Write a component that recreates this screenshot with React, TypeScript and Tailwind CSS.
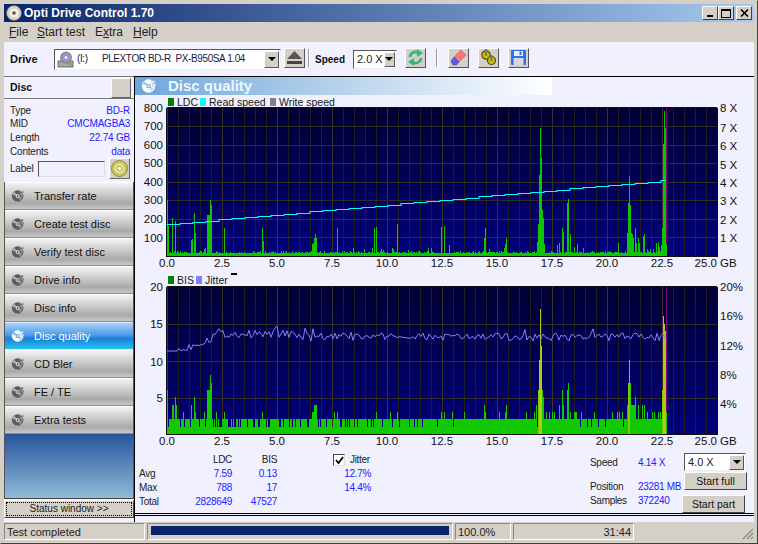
import React from "react";

// seeded noise, so the charts are the same on every load
function noise(seed: number) {
  const v = Math.sin(seed * 12.9898) * 43758.5453;
  return v - Math.floor(v);
}

const PLOT_LEFT = 167;
const END = 499;

// x offset -> bar height in px
const ldcSpikes: Record<number, number> = {
  0: 56, 1: 30, 5: 38, 8: 35, 24: 16, 25: 17, 27: 43, 28: 23, 37: 7, 38: 8, 40: 41, 41: 41, 42: 41, 43: 56, 44: 51,
  49: 5, 57: 28, 95: 28, 96: 15, 145: 12, 146: 13, 147: 18, 148: 22, 149: 18, 170: 28, 186: 8, 197: 7, 205: 8,
  207: 28, 209: 29, 214: 7, 216: 6, 225: 8, 226: 7, 230: 32, 241: 6, 261: 8, 264: 8, 274: 29, 277: 30, 282: 11,
  317: 18, 318: 28, 322: 7, 337: 8, 338: 12, 339: 18, 360: 5, 370: 14, 371: 32, 372: 81, 373: 128, 374: 98, 375: 46,
  376: 38, 377: 12, 390: 11, 392: 13, 395: 28, 396: 24, 400: 53, 401: 57, 403: 22, 407: 9, 410: 12, 416: 8, 451: 13,
  460: 23, 461: 53, 462: 80, 463: 51, 464: 23, 465: 22, 466: 18, 468: 28, 469: 13, 471: 18, 472: 13, 476: 20, 477: 22,
  480: 7, 483: 7, 486: 7, 489: 13, 491: 14, 492: 9, 494: 11, 495: 28, 496: 112, 497: 145, 498: 128, 499: 12,
};

// x offset -> bar height in BIS units
const bisSpikes: Record<number, number> = {
  0: 6, 5: 4, 6: 4, 8: 5, 9: 4, 16: 3, 24: 4, 27: 5, 28: 3, 37: 3, 40: 6, 41: 6, 42: 6, 43: 8, 44: 7, 49: 3, 57: 3,
  95: 3, 145: 3, 146: 3, 147: 4, 148: 4, 149: 4, 167: 3, 170: 3, 209: 3, 223: 3, 230: 3, 274: 3, 277: 3, 285: 3,
  297: 3, 317: 4, 318: 3, 332: 3, 338: 3, 339: 4, 359: 3, 367: 3, 369: 4, 371: 6, 372: 10, 373: 17, 374: 12, 375: 6,
  376: 5, 379: 3, 382: 3, 385: 3, 387: 3, 392: 4, 395: 6, 396: 4, 400: 6, 401: 7, 403: 3, 407: 3, 408: 3, 409: 3,
  414: 3, 427: 3, 445: 3, 450: 3, 452: 3, 455: 3, 460: 4, 461: 7, 462: 10, 463: 7, 464: 4, 465: 4, 466: 4, 467: 4,
  468: 5, 471: 4, 475: 4, 477: 4, 480: 3, 485: 3, 487: 3, 491: 3, 493: 3, 495: 6, 496: 16, 497: 15, 498: 14, 499: 3,
};

function ldcBars() {
  let d = "";
  for (let x = 0; x <= END; x++) {
    const n = noise(x + 3);
    const h = ldcSpikes[x] ?? (n > 0.9 ? 5 : n > 0.55 ? 4 : 3);
    d += `M${PLOT_LEFT + x + 0.5} 256V${256 - h}`;
  }
  return d;
}

function bisBars(match: (x: number) => boolean) {
  let d = "";
  for (let x = 0; x <= END; x++) {
    if (!match(x)) continue;
    const gapChance = x > 280 && x < 372 ? 0.06 : x > 372 ? 0.1 : 0.24;
    const units = bisSpikes[x] ?? (noise(x + 11) < gapChance ? 1 : 2);
    d += `M${PLOT_LEFT + x + 0.5} 434V${434 - Math.round(units * 7.35)}`;
  }
  return d;
}

function jitterLine() {
  let d = "";
  for (let x = 0; x <= END; x += 2) {
    let base = 100;
    if (x < 12) base = 83;
    else if (x < 45) base = 83 + ((x - 12) / 33) * 13;
    else if (x > 130) base = 97;
    const wobble = x < 12 ? 0 : (noise(x + 40) - 0.5) * 8;
    const peak = noise(x + 70) > 0.95 ? 5 : 0;
    d += `${x === 0 ? "M" : "L"}${PLOT_LEFT + x} ${(434 - base - wobble - peak).toFixed(1)}`;
  }
  return d;
}

function speedLine() {
  let d = `M${PLOT_LEFT} 224`;
  for (let x = 0; x <= END; x += 13) {
    const y = Math.round(224 - (x / END) * 44) + 0.5;
    d += `V${y}H${Math.min(PLOT_LEFT + x + 13, PLOT_LEFT + END)}`;
  }
  return d;
}

function Grid({ top, bottom, rows }: { top: number; bottom: number; rows: number[] }) {
  const cols = Array.from({ length: 51 }, (_, i) => i);
  return (
    <g shapeRendering="crispEdges">
      <defs>
        <linearGradient id={`plot${top}`} x1="0" y1="0" x2="0" y2="1">
          <stop offset="0" stopColor="#000034" />
          <stop offset="1" stopColor="#00007c" />
        </linearGradient>
      </defs>
      <rect x={PLOT_LEFT} y={top} width={550} height={bottom - top} fill={`url(#plot${top})`} />
      {cols.map((i) => (
        <line
          key={i}
          x1={PLOT_LEFT + i * 11 + 0.5}
          x2={PLOT_LEFT + i * 11 + 0.5}
          y1={top}
          y2={bottom}
          stroke={i % 5 === 0 ? "#38342c" : "#201f20"}
        />
      ))}
      {rows.map((y) => (
        <line key={y} x1={PLOT_LEFT} x2={717} y1={y + 0.5} y2={y + 0.5} stroke="#302e24" />
      ))}
      <line x1={PLOT_LEFT} x2={717} y1={top - 0.5} y2={top - 0.5} stroke="#101010" />
      <line x1={PLOT_LEFT - 0.5} x2={PLOT_LEFT - 0.5} y1={top} y2={bottom + 1} stroke="#101010" />
      <line x1={717.5} x2={717.5} y1={top} y2={bottom + 1} stroke="#101010" />
      <line x1={PLOT_LEFT} x2={718} y1={bottom + 0.5} y2={bottom + 0.5} stroke="#101010" />
      <line x1={666.5} x2={666.5} y1={top} y2={bottom} stroke="#800080" />
    </g>
  );
}

const xTicks = ["0.0", "2.5", "5.0", "7.5", "10.0", "12.5", "15.0", "17.5", "20.0", "22.5"];

function XLabels({ y }: { y: number }) {
  return (
    <g>
      {xTicks.map((t, i) => (
        <text key={t} x={PLOT_LEFT + i * 55} y={y} textAnchor="middle">
          {t}
        </text>
      ))}
      <text x={717} y={y} textAnchor="end">25.0</text>
      <text x={720} y={y}>GB</text>
    </g>
  );
}

function Legend({ y, items }: { y: number; items: { sq: number; tx: number; color: string; label: string }[] }) {
  return (
    <g fontSize="10.5">
      {items.map((it) => (
        <g key={it.label}>
          <rect x={it.sq} y={y - 4} width={6} height={8} fill={it.color} shapeRendering="crispEdges" />
          <text x={it.tx} y={y + 4} fill="#1a1a1a">{it.label}</text>
        </g>
      ))}
    </g>
  );
}

function LdcChart() {
  const left = [["800", 112], ["700", 130], ["600", 149], ["500", 167], ["400", 186], ["300", 204], ["200", 223], ["100", 242]] as const;
  const right = [["8 X", 112], ["7 X", 132], ["6 X", 150], ["5 X", 169], ["4 X", 187], ["3 X", 205], ["2 X", 224], ["1 X", 242]] as const;
  return (
    <svg className="block h-[177px] w-[619px]" viewBox="135 95 619 177" fontFamily="'Liberation Sans', sans-serif" fontSize="11.5" fill="#111">
      <Legend
        y={102}
        items={[
          { sq: 168, tx: 177, color: "#008000", label: "LDC" },
          { sq: 200, tx: 209, color: "#00ffff", label: "Read speed" },
          { sq: 270, tx: 279, color: "#808080", label: "Write speed" },
        ]}
      />
      <Grid top={108} bottom={256} rows={[126, 145, 163, 182, 200, 219, 237]} />
      <path d={ldcBars()} stroke="#10c400" fill="none" shapeRendering="crispEdges" />
      <path d={speedLine()} stroke="#00ffff" strokeWidth="1.1" fill="none" />
      {left.map(([t, y]) => (
        <text key={t} x={163} y={y} textAnchor="end">{t}</text>
      ))}
      {right.map(([t, y]) => (
        <text key={t} x={720} y={y}>{t}</text>
      ))}
      <XLabels y={267} />
    </svg>
  );
}

function BisChart() {
  const left = [["20", 291], ["15", 328], ["10", 366], ["5", 402]] as const;
  const right = [["20%", 291], ["16%", 320], ["12%", 350], ["8%", 379], ["4%", 408]] as const;
  const hot = (x: number) => (x >= 372 && x <= 374) || (x >= 496 && x <= 498);
  const warm = (x: number) => x === 371 || x === 462 || x === 461 || x === 495;
  return (
    <svg className="block h-[177px] w-[619px]" viewBox="135 272 619 177" fontFamily="'Liberation Sans', sans-serif" fontSize="11.5" fill="#111">
      <rect x={231} y={273} width={6} height={2} fill="#000" shapeRendering="crispEdges" />
      <Legend
        y={280}
        items={[
          { sq: 168, tx: 177, color: "#008000", label: "BIS" },
          { sq: 196, tx: 205, color: "#8080ff", label: "Jitter" },
        ]}
      />
      <Grid top={287} bottom={434} rows={[324, 361, 398]} />
      <path d={bisBars((x) => !hot(x) && !warm(x))} stroke="#12c800" fill="none" shapeRendering="crispEdges" />
      <path d={bisBars(warm)} stroke="#80c800" fill="none" shapeRendering="crispEdges" />
      <path d={bisBars(hot)} stroke="#b4c810" fill="none" shapeRendering="crispEdges" />
      <path d={jitterLine()} stroke="#8080ff" fill="none" strokeWidth="1" />
      {left.map(([t, y]) => (
        <text key={t} x={163} y={y} textAnchor="end">{t}</text>
      ))}
      {right.map(([t, y]) => (
        <text key={t} x={720} y={y}>{t}</text>
      ))}
      <XLabels y={445} />
    </svg>
  );
}

function DiscIcon({ className = "", color = "#5c5c5c", hole = "#d8d8d8" }: { className?: string; color?: string; hole?: string }) {
  return (
    <svg className={className} viewBox="0 0 18 18">
      <circle cx="8.5" cy="9" r="7.5" fill={color} />
      <path d="M8.5 9 L4 3.6 A7 7 0 0 0 2 7 Z" fill={hole} opacity="0.75" />
      <path d="M8.5 9 L14.6 11 A7 7 0 0 1 11.5 15 Z" fill={hole} opacity="0.45" />
      <circle cx="8.5" cy="9" r="2.6" fill={hole} />
      <circle cx="8.5" cy="9" r="1.2" fill={color} />
      <path d="M12 3 h4 v2 h-2 v2 h3 v2 h-4 z" fill={color} stroke={hole} strokeWidth="0.6" />
    </svg>
  );
}

function SmallCombo({ text, className = "" }: { text: string; className?: string }) {
  return (
    <div className={`flex items-center border border-[#555] border-r-[#eee] border-b-[#eee] bg-white pl-[3px] ${className}`}>
      <span className="flex-1 text-[11px] leading-none whitespace-nowrap text-[#222]">{text}</span>
      <span className="m-px flex h-[15px] w-[15px] items-center justify-center border border-white border-r-[#555] border-b-[#555] bg-[#d4d0c8]">
        <span className="h-0 w-0 border-x-[4px] border-t-[4px] border-x-transparent border-t-black" />
      </span>
    </div>
  );
}

function ToolButton({ children, className = "" }: { children: React.ReactNode; className?: string }) {
  return (
    <div className={`flex h-[20px] w-[21px] items-center justify-center border border-white border-r-[#555] border-b-[#555] bg-[#d4d0c8] ${className}`}>
      {children}
    </div>
  );
}

function NavButton({ label, active }: { label: string; active?: boolean }) {
  return (
    <div
      className={
        active
          ? "flex h-[28px] items-center border-y border-[#d8f0ff] bg-[linear-gradient(#a8d0fa,#4f9ee8_45%,#1c7fd8_60%,#26c4f0)] pl-[6px] text-white"
          : "flex h-[28px] items-center border-y border-t-white border-b-[#8a8a8a] bg-[linear-gradient(#f2f2f2,#d2d2d2_35%,#a9a9a9_78%,#c8c8c8)] pl-[6px] text-[#111]"
      }
    >
      <DiscIcon
        className="mr-[9px] h-[14px] w-[14px]"
        color={active ? "#ffffff" : "#5c5c5c"}
        hole={active ? "#4f9ee8" : "#d8d8d8"}
      />
      <span className="text-[11px]">{label}</span>
    </div>
  );
}

const navItems = ["Transfer rate", "Create test disc", "Verify test disc", "Drive info", "Disc info", "Disc quality", "CD Bler", "FE / TE", "Extra tests"];

const discInfo = [
  ["Type", "BD-R"],
  ["MID", "CMCMAGBA3"],
  ["Length", "22.74 GB"],
  ["Contents", "data"],
];

function Sidebar() {
  return (
    <div className="flex w-[130px] flex-col">
      <div className="flex h-[23px] items-center justify-between border-y border-t-[#777] border-b-[#777] pr-[3px] pl-[6px]">
        <span className="text-[10.5px] font-bold text-[#111]">Disc</span>
        <span className="h-[20px] w-[20px] border border-white border-r-[#666] border-b-[#666] bg-[#d4d0c8]" />
      </div>
      <div className="flex h-[83px] flex-col pt-[5px] pr-[4px] pl-[6px] text-[10px] tracking-[-0.2px]">
        {discInfo.map(([k, v]) => (
          <div key={k} className="flex h-[13.6px] items-center justify-between leading-none">
            <span className="text-[#222]">{k}</span>
            <span className="text-[#2020ff]">{v}</span>
          </div>
        ))}
        <div className="mt-0 flex items-center">
          <span className="w-[28px] text-[#222]">Label</span>
          <span className="h-[16px] w-[67px] border border-[#555] border-r-[#ddd] border-b-[#ddd]" />
          <span className="ml-[4px] flex h-[21px] w-[21px] items-center justify-center border border-white border-r-[#666] border-b-[#666] bg-[#d4d0c8]">
            <svg className="h-[17px] w-[17px]" viewBox="0 0 17 17">
              <circle cx="8.5" cy="8.5" r="8" fill="#c8c85c" stroke="#77773a" strokeWidth="0.8" />
              <circle cx="8.5" cy="8.5" r="5" fill="#e6e69a" />
              <circle cx="8.5" cy="8.5" r="2.4" fill="#f4f4d8" stroke="#8a8a40" strokeWidth="0.7" />
            </svg>
          </span>
        </div>
      </div>
      <div className="flex flex-col border-x border-[#555]">
        {navItems.map((n) => (
          <NavButton key={n} label={n} active={n === "Disc quality"} />
        ))}
        <div className="h-[65px] border-b border-[#444] bg-[linear-gradient(#27559c,#8fbad9)]" />
      </div>
      <div className="mt-px flex h-[18px] items-center border border-white border-r-[#444] border-b-[#444] bg-[#d4d0c8] p-px">
        <div className="flex h-full flex-1 items-center justify-center border border-dotted border-black text-[10px] leading-none text-[#222]">
          Status window &gt;&gt;
        </div>
      </div>
    </div>
  );
}

function Stats() {
  const rows = [
    ["", "LDC", "BIS"],
    ["Avg", "7.59", "0.13"],
    ["Max", "788", "17"],
    ["Total", "2828649", "47527"],
  ];
  return (
    <div className="flex h-[64px] pt-[4px] text-[10px] leading-none tracking-[-0.3px]">
      <div className="ml-[4px] grid grid-cols-[41px_52px_45px] grid-rows-[14px_14px_14px_14px] items-center self-start">
        {rows.map((r, i) =>
          r.map((c, j) => (
            <span
              key={`${i}-${j}`}
              className={j === 0 ? "text-[#222]" : i === 0 ? "text-right text-[#222]" : "text-right text-[#2020ff]"}
            >
              {c}
            </span>
          )),
        )}
      </div>
      <div className="ml-[56px] flex w-[38px] flex-col">
        <div className="flex h-[14px] items-center whitespace-nowrap text-[#222]">
          <span className="flex h-[12px] w-[12px] items-center justify-center border border-[#444] border-r-[#ddd] border-b-[#ddd] bg-white">
            <svg className="h-[9px] w-[9px]" viewBox="0 0 9 9">
              <path d="M1 4 L3.5 7 L8 1" fill="none" stroke="#000" strokeWidth="1.8" />
            </svg>
          </span>
          <span className="ml-[5px]">Jitter</span>
        </div>
        <span className="flex h-[14px] items-center justify-end text-[#2020ff]">12.7%</span>
        <span className="flex h-[14px] items-center justify-end text-[#2020ff]">14.4%</span>
      </div>
      <div className="ml-[219px] grid w-[95px] grid-cols-[48px_47px] grid-rows-[20px_7px_14px_14px] items-center self-start whitespace-nowrap">
        <span className="text-[#222]">Speed</span>
        <span className="text-[#2020ff]">4.14 X</span>
        <span />
        <span />
        <span className="text-[#222]">Position</span>
        <span className="text-[#2020ff]">23281 MB</span>
        <span className="text-[#222]">Samples</span>
        <span className="text-[#2020ff]">372240</span>
      </div>
      <div className="ml-[-1px] flex w-[64px] flex-col text-[10.5px] tracking-normal">
        <SmallCombo text="4.0 X" className="h-[18px] w-[62px]" />
        <div className="mt-px flex h-[18px] w-[63px] items-center justify-center border border-white border-r-[#444] border-b-[#444] bg-[#d4d0c8] text-[#111]">Start full</div>
        <div className="mt-[5px] ml-[-2px] flex h-[18px] w-[63px] items-center justify-center border border-white border-r-[#444] border-b-[#444] bg-[#d4d0c8] text-[#111]">Start part</div>
      </div>
    </div>
  );
}

function Toolbar() {
  return (
    <div className="flex h-[34px] items-center bg-[#f0f0ff] pl-[6px]">
      <span className="w-[44px] text-[11px] font-bold text-[#111]">Drive</span>
      <div className="flex h-[21px] w-[227px] items-center border border-[#555] border-r-[#eee] border-b-[#eee] bg-white pl-[2px]">
        <svg className="h-[17px] w-[17px] shrink-0" viewBox="0 0 17 17">
          <rect x="1" y="10" width="15" height="6" fill="#a8a8a0" stroke="#555" strokeWidth="0.8" />
          <circle cx="9" cy="6.5" r="5.5" fill="#a090c8" stroke="#666" strokeWidth="0.7" />
          <circle cx="9" cy="6.5" r="1.5" fill="#eee" />
          <rect x="12" y="12" width="2" height="2" fill="#30c030" />
        </svg>
        <span className="ml-[3px] flex-1 text-[10px] leading-none tracking-[-0.4px] whitespace-pre text-[#221840]">(I:)      PLEXTOR BD-R  PX-B950SA 1.04</span>
        <span className="m-px flex h-[17px] w-[15px] shrink-0 items-center justify-center border border-white border-r-[#555] border-b-[#555] bg-[#d4d0c8]">
          <span className="h-0 w-0 border-x-[4px] border-t-[4px] border-x-transparent border-t-black" />
        </span>
      </div>
      <ToolButton className="mb-[3px] ml-[3px]">
        <svg className="h-[16px] w-[17px]" viewBox="0 0 17 16">
          <path d="M8.5 1 L16 9 H1 Z" fill="#555" />
          <rect x="1" y="11" width="15" height="3" fill="#444" />
        </svg>
      </ToolButton>
      <span className="mb-[3px] ml-[3px] h-[18px] w-[2px] border-r border-white bg-[#999]" />
      <span className="ml-[5px] w-[38px] text-[10px] font-bold text-[#111]">Speed</span>
      <SmallCombo text="2.0 X" className="h-[19px] w-[44px]" />
      <ToolButton className="mb-[3px] ml-[8px]">
        <svg className="h-[17px] w-[17px]" viewBox="0 0 17 17">
          <path d="M3 8 A5.5 5.5 0 0 1 11 3.5" fill="none" stroke="#30b878" strokeWidth="2.6" />
          <path d="M10 0 L16 4 L10 8 Z" fill="#30b878" />
          <path d="M14 9 A5.5 5.5 0 0 1 6 13.5" fill="none" stroke="#30b878" strokeWidth="2.6" />
          <path d="M7 9 L1 13 L7 17 Z" fill="#30b878" />
        </svg>
      </ToolButton>
      <span className="mb-[3px] ml-[10px] h-[18px] w-[2px] border-r border-white bg-[#999]" />
      <ToolButton className="mb-[3px] ml-[10px]">
        <svg className="h-[17px] w-[17px]" viewBox="0 0 17 17">
          <path d="M11 1 L16 6 L9 13 L4 8 Z" fill="#f07878" stroke="#b04848" strokeWidth="0.5" />
          <path d="M4 8 L9 13 L6.5 16 L3 16 L1 12 Z" fill="#5a5ae8" stroke="#3838a0" strokeWidth="0.5" />
        </svg>
      </ToolButton>
      <ToolButton className="mb-[3px] ml-[9px]">
        <svg className="h-[17px] w-[17px]" viewBox="0 0 17 17">
          <circle cx="6" cy="6" r="4.2" fill="#c8c000" stroke="#555000" strokeWidth="1.2" />
          <circle cx="11.5" cy="11.5" r="4" fill="#c8c000" stroke="#555000" strokeWidth="1.2" />
          <rect x="5" y="0" width="2" height="7" fill="#777" />
          <rect x="10.5" y="6" width="2" height="6" fill="#777" />
        </svg>
      </ToolButton>
      <ToolButton className="mb-[3px] ml-[9px]">
        <svg className="h-[17px] w-[17px]" viewBox="0 0 17 17">
          <rect x="1" y="1" width="15" height="15" rx="1" fill="#2f6fe8" />
          <rect x="4" y="2" width="9" height="5" fill="#e8eefc" />
          <rect x="9.5" y="2.5" width="2" height="3.5" fill="#2f6fe8" />
          <rect x="3.5" y="9" width="10" height="7" fill="#d8d8d8" />
        </svg>
      </ToolButton>
    </div>
  );
}

function StatusBar() {
  const panel = "flex h-[17px] items-center border border-[#888] border-r-white border-b-white pt-[1px] text-[#222]";
  return (
    <div className="flex h-[18px] items-end gap-[2px] bg-[#d4d0c8] text-[11px] leading-none">
      <div className={`${panel} w-[141px] pl-[2px]`}>Test completed</div>
      <div className={`${panel} w-[306px] p-[3px]`}>
        <div className="h-[9px] w-full bg-[#0a246a]" />
      </div>
      <div className={`${panel} w-[56px] pl-[2px]`}>100.0%</div>
      <div className={`${panel} w-[121px] justify-end pr-[2px]`}>31:44</div>
      <svg className="ml-auto h-[14px] w-[14px] self-end" viewBox="0 0 14 14">
        <path d="M13 3 L3 13 M13 7 L7 13 M13 11 L11 13" stroke="#888" strokeWidth="1.2" />
      </svg>
    </div>
  );
}

export default function App() {
  return (
    <div
      className="flex h-[544px] w-[758px] flex-col overflow-hidden border border-[#d4d0c8] border-r-[#404040] border-b-[#404040] bg-[#d4d0c8] p-[3px]"
      style={{ fontFamily: "'Liberation Sans', Arial, sans-serif" }}
    >
      <div className="flex h-[18px] shrink-0 items-center bg-[linear-gradient(90deg,#0a246a,#a6caf0)] pl-[2px]">
        <svg className="h-[16px] w-[16px]" viewBox="0 0 16 16">
          <circle cx="8" cy="8" r="7.5" fill="#d8d4c4" stroke="#6a6458" strokeWidth="0.6" />
          <circle cx="8" cy="8" r="4.5" fill="#f4f0e4" />
          <circle cx="8" cy="8" r="1.8" fill="#555" />
        </svg>
        <span className="ml-[2px] text-[12px] font-bold text-white">Opti Drive Control 1.70</span>
        <div className="ml-auto flex pr-[2px]">
          <span className="flex h-[14px] w-[16px] items-end justify-center border border-white border-r-[#404040] border-b-[#404040] bg-[#d4d0c8] pb-[2px]">
            <span className="h-[2px] w-[6px] bg-black" />
          </span>
          <span className="flex h-[14px] w-[16px] items-center justify-center border border-white border-r-[#404040] border-b-[#404040] bg-[#d4d0c8]">
            <span className="h-[9px] w-[10px] border border-t-2 border-black" />
          </span>
          <span className="ml-[2px] flex h-[14px] w-[16px] items-center justify-center border border-white border-r-[#404040] border-b-[#404040] bg-[#d4d0c8]">
            <svg className="h-[8px] w-[9px]" viewBox="0 0 9 8">
              <path d="M1 0.5 L8 7.5 M8 0.5 L1 7.5" stroke="#000" strokeWidth="1.6" />
            </svg>
          </span>
        </div>
      </div>

      <div className="flex h-[20px] shrink-0 items-center pl-[5px] text-[12px] text-[#222]">
        <span className="w-[28px]"><u>F</u>ile</span>
        <span className="w-[58px]"><u>S</u>tart test</span>
        <span className="w-[38px]">E<u>x</u>tra</span>
        <span><u>H</u>elp</span>
      </div>

      <Toolbar />

      <div className="flex min-h-0 flex-1 bg-[#f0f0ff]">
        <Sidebar />
        <div className="flex w-[620px] flex-col border-t border-l border-black">
          <div className="flex h-[18px] w-[417px] shrink-0 items-center bg-[linear-gradient(90deg,#6ea6da,#a9cbe8_40%,#ffffff)] pl-[6px]">
            <DiscIcon className="h-[16px] w-[16px]" color="#ffffff" hole="#7fb0dc" />
            <span className="ml-[11px] text-[15px] font-bold text-[#eef6ff]">Disc quality</span>
          </div>
          <LdcChart />
          <BisChart />
          <Stats />
          <div className="h-[3px] shrink-0 border-y border-black" />
        </div>
      </div>

      <StatusBar />
    </div>
  );
}
